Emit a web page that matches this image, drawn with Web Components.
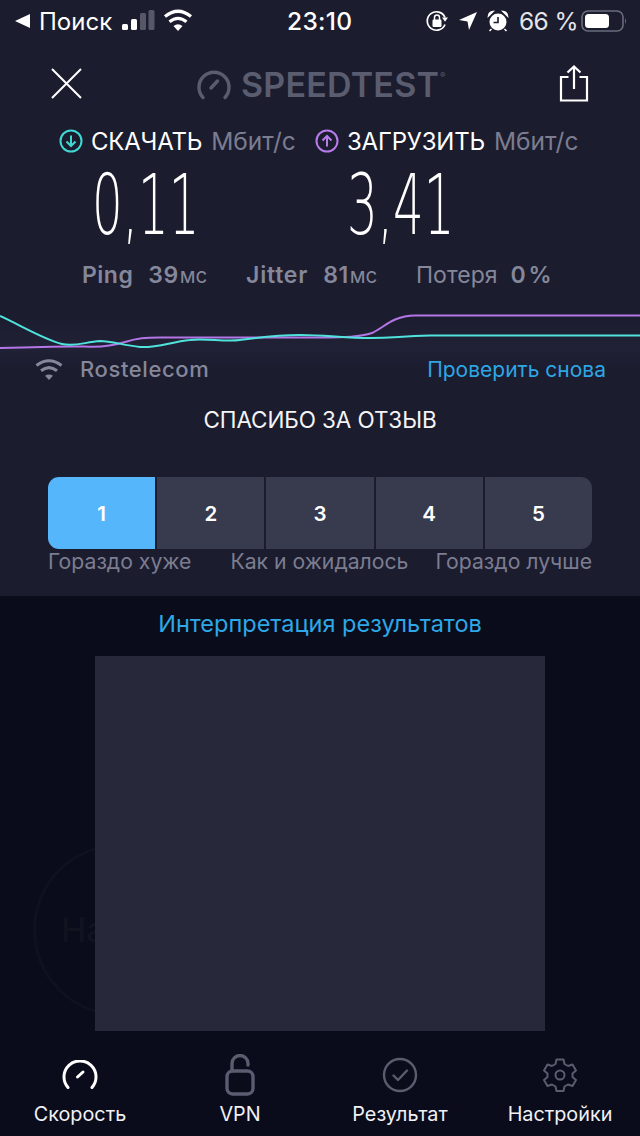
<!DOCTYPE html>
<html lang="ru">
<head>
<meta charset="utf-8">
<title>Speedtest</title>
<style>
html,body{margin:0;padding:0;background:#0a0c1c;}
body{width:640px;height:1136px;overflow:hidden;font-family:Inter,"Liberation Sans",sans-serif;color:#fff;}
</style>
</head>
<body>
<speed-page></speed-page>
<script>
// helper: cada componente define su html y sus estilos en el shadow root
class BaseElement extends HTMLElement{
    constructor(){
        super();
        this.attachShadow({mode:'open'});
    }
    connectedCallback(){
        this.shadowRoot.innerHTML = `<style>${this.styles()}</style>${this.template()}`;
    }
    styles(){return ':host{display:block}';}
    template(){return '';}
}

class StatusBar extends BaseElement{
    styles(){return `
        :host{display:flex;height:42px;align-items:center;font-size:24px;color:#fff;box-sizing:border-box;padding:0 12px 0 15px;position:relative}
        svg{display:block;flex:none}
        .left,.right{display:flex;align-items:center}
        .left{width:276px}
        .time{width:65px;font-weight:500;font-size:24.5px;text-align:center;letter-spacing:.3px}
        .right{margin-left:74px}
        .pct{font-size:24.5px;margin:0 5px 0 10px;width:57px;white-space:nowrap;color:#e4e4ea;letter-spacing:-.6px}
    `;}
    template(){return `
        <div class="left">
            <svg width="15" height="14" viewBox="0 0 15 14"><path d="M0 7 15 0V14Z" fill="#fff"/></svg>
            <span style="margin-left:9px;width:83px">Поиск</span>
            <svg width="33" height="22" viewBox="0 0 33 22" style="margin-top:-2px"><rect x="0" y="15" width="6" height="6" rx="1.5" fill="#fff"/><rect x="9" y="10" width="6" height="11" rx="1.5" fill="#fff"/><rect x="18" y="4" width="6" height="17" rx="1.5" fill="#565868"/><rect x="26.500" y="1" width="6" height="20" rx="1.5" fill="#565868"/></svg>
            <svg width="30" height="22" viewBox="0 0 30 22" style="margin-left:8px;margin-top:-2px"><path d="M15 22 10.500 17Q15 13.500 19.500 17Z" fill="#fff"/><path d="M6.500 12.800Q15 5.800 23.500 12.800" fill="none" stroke="#fff" stroke-width="3.200"/><path d="M2 7.500Q15-3 28 7.500" fill="none" stroke="#fff" stroke-width="3.200"/></svg>
        </div>
        <div class="time">23:10</div>
        <div class="right">
            <svg width="22" height="22" viewBox="0 0 22 22"><path d="M19 14.500A9.200 9.200 0 1 1 19 7.500" fill="none" stroke="#fff" stroke-width="1.700"/><path d="M16 7.500h6l-3 4.200z" fill="#fff"/><rect x="6.500" y="9.500" width="9" height="7.500" rx="1.200" fill="#fff"/><path d="M8.500 10V7.500a2.500 2.500 0 0 1 5 0V10" fill="none" stroke="#fff" stroke-width="1.500"/></svg>
            <svg width="20" height="20" viewBox="0 0 20 20" style="margin-left:10px"><path d="M19 1 11 19 9.500 10.500 1 9Z" fill="#fff"/></svg>
            <svg width="22" height="22" viewBox="0 0 22 22" style="margin-left:9px"><circle cx="11" cy="12" r="8.500" fill="#fff"/><path d="M11 7v5.500H6.500" fill="none" stroke="#1b1c2e" stroke-width="1.600"/><path d="M1.500 6Q2 2 6 1.500ZM20.500 6Q20 2 16 1.500ZM4.500 19l-2 2M17.500 19l2 2" fill="#fff" stroke="#fff" stroke-width="1.500"/></svg>
            <span class="pct">66 %</span>
            <svg width="47" height="22" viewBox="0 0 47 22"><rect x="1" y="1" width="41" height="20" rx="6" fill="none" stroke="#6a6c7c" stroke-width="1.600"/><rect x="4" y="4" width="24" height="14" rx="3.500" fill="#fff"/><path d="M44 8q2 3 0 6z" fill="#6a6c7c"/></svg>
        </div>
    `;}
}

class TopBar extends BaseElement{
    styles(){return `
        :host{display:flex;height:86px;align-items:center;position:relative;box-sizing:border-box;padding:0 51px 0 51px;justify-content:space-between}
        .logo{display:flex;align-items:center;gap:10px;color:#5a5c6f;font-weight:600;font-size:34px;letter-spacing:.2px;position:absolute;left:197px;top:22px}
        sup{font-size:8px;margin-left:-9px;margin-top:-20px}
        svg{display:block}
    `;}
    template(){return `
        <svg width="31" height="31" viewBox="0 0 31 31" style="margin-top:-3px"><path d="M1 1 30 30M30 1 1 30" stroke="#fff" stroke-width="2" fill="none"/></svg>
        <div class="logo">
            <svg width="34" height="30" viewBox="0 0 34 30"><path d="M6 27.500A15 15 0 1 1 28 27.500" fill="none" stroke="#5a5c6f" stroke-width="3.400" stroke-linecap="round"/><path d="M14 18 20.500 11" stroke="#5a5c6f" stroke-width="3.400" stroke-linecap="round"/></svg>
            <span>SPEEDTEST</span><sup>®</sup>
        </div>
        <svg width="30" height="37" viewBox="0 0 30 37" style="margin-top:-3px"><path d="M9.500 12H2V35.500H28V12H20.500" fill="none" stroke="#fff" stroke-width="2.200"/><path d="M15 24V2M8.500 7.500 15 1.500 21.500 7.500" fill="none" stroke="#fff" stroke-width="2.200"/></svg>
    `;}
}

class ResultCol extends BaseElement{
    styles(){
        const color = this.getAttribute('color');
        return `
        :host{display:block;position:relative}
        .head{display:flex;align-items:center;height:26px;white-space:nowrap}
        .name{font-size:24px;margin-left:8px;letter-spacing:-.2px;color:#fff}
        .unit{font-size:24.500px;margin-left:9px;color:#7b7d90}
        .circle{flex:none;display:block}
        .val{font-family:"DejaVu Sans",sans-serif;font-weight:200;font-size:84px;line-height:72px;color:#fff;transform:scaleX(.575);transform-origin:0 0;white-space:nowrap;position:absolute;top:41px;left:${this.getAttribute('shift')}px}
        svg path,svg circle{stroke:${color}}
    `;}
    template(){
        const arrow = this.getAttribute('dir')=='down'
            ? 'M12 6.500V17M7.500 12.500 12 17 16.500 12.500'
            : 'M12 17.500V7M7.500 11.500 12 7 16.500 11.500';
        return `
        <div class="head">
            <svg class="circle" width="24" height="24" viewBox="0 0 24 24"><circle cx="12" cy="12" r="10.500" fill="none" stroke-width="2"/><path d="${arrow}" fill="none" stroke-width="2"/></svg>
            <span class="name">${this.getAttribute('name')}</span>
            <span class="unit">Мбит/с</span>
        </div>
        <div class="val">${this.getAttribute('value')}</div>
    `;}
}

class Results extends BaseElement{
    styles(){return `
        :host{display:grid;grid-template-columns:256px 1fr;padding:0 0 0 59px;height:124px;box-sizing:border-box;}
    `;}
    template(){return `
        <result-col color="#3fd9d4" dir="down" name="СКАЧАТЬ" value="0,11" shift="33"></result-col>
        <result-col color="#b77bea" dir="up" name="ЗАГРУЗИТЬ" value="3,41" shift="32"></result-col>
    `;}
}

class StatsRow extends BaseElement{
    styles(){return `
        :host{display:flex;height:46px;align-items:center;padding-left:82px;color:#85879a;font-size:23px;white-space:nowrap}
        b{font-weight:600;letter-spacing:.5px}
        .ms{font-size:20.500px;font-weight:400;margin-left:1px}
        .lab{margin-right:15px}
        .g{display:flex;align-items:baseline}
    `;}
    template(){return `
        <div class="g" style="width:164px"><b class="lab">Ping</b><b>39</b><span class="ms">мс</span></div>
        <div class="g" style="width:170px"><b class="lab" style="letter-spacing:.8px">Jitter</b><b>81</b><span class="ms">мс</span></div>
        <div class="g"><span class="lab" style="margin-right:13px">Потеря</span><b style="word-spacing:-4px">0 %</b></div>
    `;}
}

class SpeedGraph extends BaseElement{
    styles(){return `:host{display:block;height:70px;margin-top:2px}svg{display:block}`;}
    template(){return `
        <svg width="640" height="70" viewBox="0 300 640 70">
            <defs><linearGradient id="g" x1="0" y1="0" x2="0" y2="1"><stop offset="0" stop-color="#2a2b45" stop-opacity="0"/><stop offset=".6" stop-color="#2a2b45" stop-opacity=".35"/><stop offset="1" stop-color="#2a2b45" stop-opacity="0"/></linearGradient></defs>
            <rect x="0" y="318" width="640" height="50" fill="url(#g)"/>
            <path d="M0 348C30 347 60 346 85 346.500C100 347.500 112 346 125 342C138 338 145 337.500 160 337.500H320C345 337.500 360 337 372 333C385 327 392 316 415 315.500H640" fill="none" stroke="#b476e6" stroke-width="2"/>
            <path d="M0 316C20 325 45 340 62 344C75 347 85 342 100 341C112 341 122 345 140 347C158 348 170 342 190 340C205 338 225 342 240 340C255 338 275 335 300 335C325 335 345 338 370 338C395 338 400 336 430 335.500H640" fill="none" stroke="#4fe3dc" stroke-width="2"/>
        </svg>
    `;}
}

class ProviderRow extends BaseElement{
    styles(){return `
        :host{display:flex;align-items:center;justify-content:space-between;height:38px;padding:0 34px 0 35px;margin-top:-20px;font-size:22px;white-space:nowrap}
        .p{display:flex;align-items:center;color:#85879a;font-weight:500;letter-spacing:.6px}
        a{color:#2ea6e4;font-size:21px;text-decoration:none}
        svg{display:block;margin-right:17px}
    `;}
    template(){return `
        <div class="p">
            <svg width="28" height="21" viewBox="0 0 28 21"><path d="M14 21 10 16.800Q14 14 18 16.800Z" fill="#85879a"/><path d="M6 11.800Q14 5.500 22 11.800" fill="none" stroke="#85879a" stroke-width="3"/><path d="M1.500 6.500Q14-3 26.500 6.500" fill="none" stroke="#85879a" stroke-width="3"/></svg>
            <span>Rostelecom</span>
        </div>
        <a>Проверить снова</a>
    `;}
}

class RatingBar extends BaseElement{
    styles(){return `
        :host{display:block;padding:0 48px;margin-top:15px}
        .title{text-align:center;font-size:22.500px;height:34px;line-height:34px;color:#f4f4f6;letter-spacing:-.1px}
        .btns{display:grid;grid-template-columns:repeat(5,1fr);gap:2px;margin-top:40px;border-radius:11px;overflow:hidden}
        .btns div{height:72px;background:#383a4e;display:flex;align-items:center;justify-content:center;font-size:20.500px;font-weight:600;color:#fff}
        .btns .on{background:#56b6fb}
        .labels{display:flex;justify-content:space-between;font-size:21.200px;color:#7b7d90;margin-top:-2px;height:28px;line-height:28px;white-space:nowrap}
    `;}
    template(){return `
        <div class="title">СПАСИБО ЗА ОТЗЫВ</div>
        <div class="btns"><div class="on">1</div><div>2</div><div>3</div><div>4</div><div>5</div></div>
        <div class="labels"><span>Гораздо хуже</span><span style="margin-left:12px">Как и ожидалось</span><span>Гораздо лучше</span></div>
    `;}
}

class LowerPanel extends BaseElement{
    styles(){return `
        :host{display:block;position:relative;background:#0a0c1c;height:436px;overflow:hidden}
        .link{text-align:center;color:#2ea8e6;font-size:23.500px;height:56px;line-height:55px}
        .ad{width:450px;height:375px;margin:4px auto 0;background:#27283a;position:relative;z-index:1}
        .ghost{position:absolute;left:33px;top:248px;width:172px;height:172px;border:3px solid #0f111f;border-radius:50%;box-sizing:border-box}
        .ghost span{position:absolute;left:25px;top:62px;font-size:34px;font-weight:500;color:#11131f}
    `;}
    template(){return `
        <div class="link">Интерпретация результатов</div>
        <div class="ghost"><span>На</span></div>
        <div class="ad"></div>
    `;}
}

class TabItem extends BaseElement{
    styles(){return `
        :host{display:flex;flex-direction:column;align-items:center;height:104px;padding-top:14px;box-sizing:border-box}
        .ic{height:58px;display:flex;align-items:center;justify-content:center}
        .t{font-size:19.800px;color:#f1f1f4;white-space:nowrap;line-height:24px;margin-top:-2px}
        ::slotted(svg){display:block}
    `;}
    template(){return `<div class="ic"><slot></slot></div><div class="t">${this.getAttribute('label')}</div>`;}
}

class TabBar extends BaseElement{
    styles(){return `
        :host{display:grid;grid-template-columns:repeat(4,160px);height:104px;background:#0a0c1c}
    `;}
    template(){return `
        <tab-item label="Скорость"><svg width="36" height="30" viewBox="0 0 36 30"><path d="M6 27.500A16 16 0 1 1 30 27.500" fill="none" stroke="#fff" stroke-width="3" stroke-linecap="round"/><path d="M15.500 17 21 12" stroke="#fff" stroke-width="3" stroke-linecap="round"/></svg></tab-item>
        <tab-item label="VPN"><svg width="30" height="42" viewBox="0 0 30 42"><rect x="2" y="17" width="26" height="23" rx="5.500" fill="none" stroke="#5a5c6f" stroke-width="3.400"/><path d="M7 17V9.500a8 8 0 0 1 16 0V11" fill="none" stroke="#5a5c6f" stroke-width="3.400" stroke-linecap="round"/></svg></tab-item>
        <tab-item label="Результат"><svg width="36" height="36" viewBox="0 0 36 36"><circle cx="18" cy="18" r="16" fill="none" stroke="#5a5c6f" stroke-width="2.400"/><path d="M11.500 18.500 16 23 25 13.500" fill="none" stroke="#5a5c6f" stroke-width="2.400" stroke-linecap="round" stroke-linejoin="round"/></svg></tab-item>
        <tab-item label="Настройки"><svg width="36" height="36" viewBox="0 0 36 36"><path d="M14.500 2.500h7l1 4.500 3.500 2 4.500-1.500 3.500 6-3.500 3v3.500l3.500 3-3.500 6-4.500-1.500-3.500 2-1 4.500h-7l-1-4.500-3.500-2-4.500 1.500-3.500-6 3.500-3v-3.500l-3.500-3 3.500-6 4.500 1.500 3.500-2z" fill="none" stroke="#5a5c6f" stroke-width="2" stroke-linejoin="round"/><circle cx="18" cy="18" r="4.500" fill="none" stroke="#5a5c6f" stroke-width="2"/></svg></tab-item>
    `;}
}

class SpeedPage extends BaseElement{
    styles(){return `
        :host{display:block;width:640px;height:1136px}
        .upper{background:#1b1c2e;height:596px;overflow:hidden}
    `;}
    template(){return `
        <div class="upper">
            <status-bar></status-bar>
            <top-bar></top-bar>
            <results-block></results-block>
            <stats-row></stats-row>
            <speed-graph></speed-graph>
            <provider-row></provider-row>
            <rating-bar></rating-bar>
        </div>
        <lower-panel></lower-panel>
        <tab-bar></tab-bar>
    `;}
}

customElements.define('status-bar',StatusBar);
customElements.define('top-bar',TopBar);
customElements.define('result-col',ResultCol);
customElements.define('results-block',Results);
customElements.define('stats-row',StatsRow);
customElements.define('speed-graph',SpeedGraph);
customElements.define('provider-row',ProviderRow);
customElements.define('rating-bar',RatingBar);
customElements.define('lower-panel',LowerPanel);
customElements.define('tab-item',TabItem);
customElements.define('tab-bar',TabBar);
customElements.define('speed-page',SpeedPage);
</script>
</body>
</html>
